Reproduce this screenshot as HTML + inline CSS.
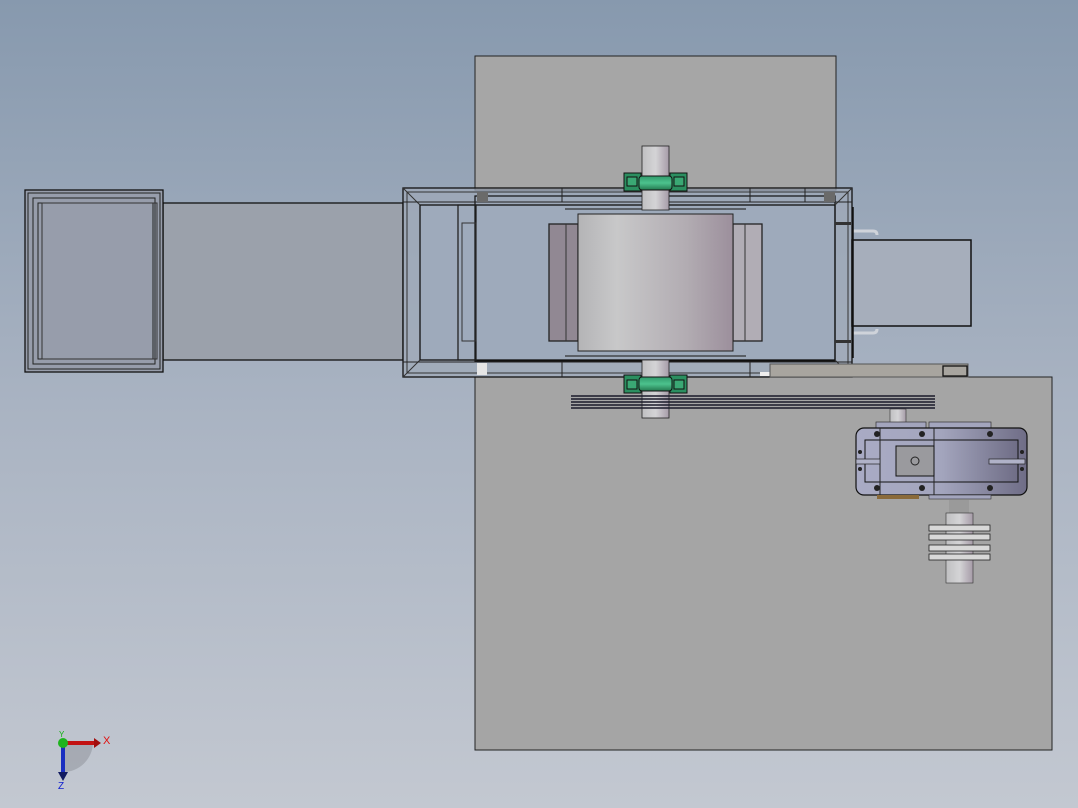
<!DOCTYPE html>
<html><head><meta charset="utf-8"><style>
html,body{margin:0;padding:0;width:1078px;height:808px;overflow:hidden}
body{background:linear-gradient(#8799ae 0%,#a9b3c2 50%,#c3c8d1 100%)}
svg{position:absolute;left:0;top:0}
</style></head><body>
<svg width="1078" height="808" viewBox="0 0 1078 808" xmlns="http://www.w3.org/2000/svg">
<defs>
<linearGradient id="drum" x1="0" x2="1"><stop offset="0" stop-color="#b4b4b6"/><stop offset=".25" stop-color="#c8c8c9"/><stop offset=".7" stop-color="#b2acb2"/><stop offset="1" stop-color="#9c8f9c"/></linearGradient>
<linearGradient id="shaft" x1="0" x2="1"><stop offset="0" stop-color="#bfbfc1"/><stop offset=".5" stop-color="#d4d4d6"/><stop offset="1" stop-color="#a69ba8"/></linearGradient>
<linearGradient id="gb" x1="0" x2="1"><stop offset="0" stop-color="#a9abc4"/><stop offset=".5" stop-color="#a3a5bd"/><stop offset="1" stop-color="#6f6d86"/></linearGradient>
<linearGradient id="grn" x1="0" y1="0" x2="0" y2="1"><stop offset="0" stop-color="#2f9a6a"/><stop offset=".5" stop-color="#4cc28d"/><stop offset="1" stop-color="#24784f"/></linearGradient>
</defs>
<!-- panels -->
<rect x="475" y="56" width="361" height="134" fill="#a6a6a6" stroke="#222" stroke-width="1"/>
<rect x="475" y="377" width="577" height="373" fill="#a5a5a5" stroke="#222" stroke-width="1"/>
<!-- left chute -->
<rect x="163" y="203" width="240" height="157" fill="#9ba1ab" stroke="#111" stroke-width="1.3"/>
<rect x="25" y="190" width="138" height="182" fill="#979dab" stroke="#111" stroke-width="1.3"/>
<rect x="28" y="193" width="132" height="176" fill="none" stroke="#222"/>
<rect x="33" y="198" width="122" height="166" fill="none" stroke="#222"/>
<rect x="38" y="203" width="115" height="156" fill="none" stroke="#222"/>
<rect x="42" y="203" width="115" height="156" fill="none" stroke="#333"/>
<!-- frame -->
<rect x="403" y="188" width="449" height="189" fill="#9fa9b8" fill-opacity=".7" stroke="#111" stroke-width="1.3"/>
<rect x="407" y="192" width="441" height="181" fill="none" stroke="#333"/>
<rect x="420" y="205" width="415" height="155" fill="#9eaabb" stroke="#111" stroke-width="1.3"/>
<rect x="475" y="196" width="360" height="165" fill="none" stroke="#111" stroke-width="1.2"/>
<line x1="403" y1="188" x2="420" y2="205" stroke="#333"/><line x1="852" y1="188" x2="835" y2="205" stroke="#333"/>
<line x1="403" y1="377" x2="420" y2="360" stroke="#333"/><line x1="852" y1="377" x2="835" y2="360" stroke="#333"/>
<line x1="403" y1="202" x2="852" y2="202" stroke="#222"/><line x1="403" y1="362" x2="852" y2="362" stroke="#222"/>
<rect x="458" y="205" width="18" height="155" fill="none" stroke="#222" stroke-width="1.3"/>
<rect x="462" y="223" width="14" height="118" fill="none" stroke="#333"/>
<rect x="477" y="192" width="11" height="10" fill="#6a6a6a"/><rect x="824" y="192" width="11" height="10" fill="#6a6a6a"/>
<rect x="477" y="363" width="10" height="12" fill="#e6e6e6"/>
<line x1="562" y1="188" x2="562" y2="202" stroke="#222"/><line x1="750" y1="188" x2="750" y2="202" stroke="#222"/><line x1="805" y1="188" x2="805" y2="202" stroke="#222"/>
<line x1="562" y1="362" x2="562" y2="377" stroke="#222"/><line x1="750" y1="362" x2="750" y2="377" stroke="#222"/>
<rect x="760" y="372" width="10" height="4" fill="#eee"/>
<!-- right box -->
<rect x="852" y="240" width="119" height="86" fill="#a6aebb" stroke="#111" stroke-width="1.5"/>
<path d="M853 231 h20 q4 0 4 4 M853 333 h20 q4 0 4 -4" fill="none" stroke="#cfd3da" stroke-width="3"/>
<line x1="853" y1="207" x2="853" y2="358" stroke="#111" stroke-width="1.5"/>
<rect x="835" y="222" width="16" height="3" fill="#333"/><rect x="835" y="340" width="16" height="3" fill="#333"/>
<!-- strip -->
<rect x="770" y="364" width="198" height="13" fill="#a8a59f" stroke="#555"/>
<rect x="943" y="366" width="24" height="10" fill="#a8a59f" stroke="#111" stroke-width="1.3"/>
<!-- drum -->
<rect x="549" y="224" width="29" height="117" fill="#918893" stroke="#222" stroke-width="1.3"/>
<line x1="566" y1="224" x2="566" y2="341" stroke="#333"/>
<rect x="733" y="224" width="29" height="117" fill="#b1adb5" stroke="#222" stroke-width="1.3"/>
<line x1="745" y1="224" x2="745" y2="341" stroke="#333"/>
<line x1="565" y1="209" x2="746" y2="209" stroke="#333" stroke-width="1.3"/>
<line x1="565" y1="356" x2="746" y2="356" stroke="#333" stroke-width="1.3"/>
<rect x="578" y="214" width="155" height="137" fill="url(#drum)" stroke="#222"/>
<!-- shafts -->
<rect x="642" y="146" width="27" height="64" fill="url(#shaft)" stroke="#222" stroke-width=".8"/>
<rect x="642" y="360" width="27" height="58" fill="url(#shaft)" stroke="#222" stroke-width=".8"/>
<!-- bearings -->
<g stroke="#111" stroke-width="1">
<rect x="624" y="173" width="17" height="18" fill="#2b8f60"/><rect x="670" y="173" width="17" height="18" fill="#2b8f60"/>
<rect x="639" y="176" width="33" height="14" rx="3" fill="url(#grn)"/>
<rect x="627" y="177" width="10" height="9" fill="#3aa874"/><rect x="674" y="177" width="10" height="9" fill="#3aa874"/>
<rect x="624" y="375" width="17" height="18" fill="#2b8f60"/><rect x="670" y="375" width="17" height="18" fill="#2b8f60"/>
<rect x="639" y="377" width="33" height="14" rx="3" fill="url(#grn)"/>
<rect x="627" y="380" width="10" height="9" fill="#3aa874"/><rect x="674" y="380" width="10" height="9" fill="#3aa874"/>
</g>
<!-- belt -->
<g stroke="#1a1a2a" stroke-width="1.4">
<line x1="571" y1="396" x2="935" y2="396"/><line x1="571" y1="399" x2="935" y2="399"/>
<line x1="571" y1="402" x2="935" y2="402"/><line x1="571" y1="405" x2="935" y2="405"/>
<line x1="571" y1="408" x2="935" y2="408"/>
</g>
<rect x="890" y="409" width="16" height="20" fill="url(#shaft)" stroke="#333" stroke-width=".6"/>
<!-- gearbox -->
<rect x="876" y="422" width="50" height="6" fill="#a3a5bd" stroke="#333" stroke-width=".7"/>
<rect x="929" y="422" width="62" height="6" fill="#a3a5bd" stroke="#333" stroke-width=".7"/>
<rect x="856" y="428" width="171" height="67" rx="8" fill="url(#gb)" stroke="#111" stroke-width="1.2"/>
<rect x="865" y="440" width="153" height="42" fill="url(#gb)" stroke="#111"/>
<line x1="880" y1="428" x2="880" y2="495" stroke="#222"/>
<line x1="934" y1="428" x2="934" y2="495" stroke="#222"/>
<rect x="896" y="446" width="38" height="30" fill="#9a9a9e" stroke="#111"/>
<circle cx="915" cy="461" r="4" fill="none" stroke="#222"/>
<rect x="856" y="459" width="24" height="5" fill="#b0b2c8" stroke="#222" stroke-width=".7"/>
<rect x="989" y="459" width="36" height="5" fill="#b0b2c8" stroke="#222" stroke-width=".7"/>
<g fill="#222"><circle cx="877" cy="434" r="3"/><circle cx="922" cy="434" r="3"/><circle cx="990" cy="434" r="3"/>
<circle cx="877" cy="488" r="3"/><circle cx="922" cy="488" r="3"/><circle cx="990" cy="488" r="3"/>
<circle cx="860" cy="452" r="2"/><circle cx="860" cy="469" r="2"/><circle cx="1022" cy="452" r="2"/><circle cx="1022" cy="469" r="2"/></g>
<rect x="877" y="495" width="42" height="4" fill="#8a6a3a"/>
<rect x="929" y="495" width="62" height="4" fill="#a3a5bd" stroke="#333" stroke-width=".6"/>
<!-- coupling -->
<rect x="949" y="500" width="20" height="14" fill="#9a9a9a"/>
<rect x="946" y="513" width="27" height="70" fill="url(#shaft)" stroke="#333" stroke-width=".6"/>
<g fill="#d8d8d8" stroke="#222" stroke-width=".8">
<rect x="929" y="525" width="61" height="6"/><rect x="929" y="534" width="61" height="6"/>
<rect x="929" y="545" width="61" height="6"/><rect x="929" y="554" width="61" height="6"/>
</g>
<!-- triad -->
<path d="M63 743 L63 772 A30 30 0 0 0 93 743 Z" fill="#8b8f97" opacity=".5"/>
<line x1="63" y1="743" x2="94" y2="743" stroke="#c21212" stroke-width="4"/>
<path d="M94 738 L101 743 L94 748 Z" fill="#a10e0e"/>
<line x1="63" y1="743" x2="63" y2="772" stroke="#1a2ec0" stroke-width="4"/>
<path d="M58 772 L63 781 L68 772 Z" fill="#111a60"/>
<circle cx="63" cy="743" r="5" fill="#1eb41e"/>
<text x="103" y="744" font-family="Liberation Sans, sans-serif" font-size="11" fill="#e01010">X</text>
<text x="58" y="789" font-family="Liberation Sans, sans-serif" font-size="10" fill="#1020d0">Z</text>
<text x="59" y="737" font-family="Liberation Sans, sans-serif" font-size="8" fill="#10b010">Y</text>
</svg>
</body></html>
